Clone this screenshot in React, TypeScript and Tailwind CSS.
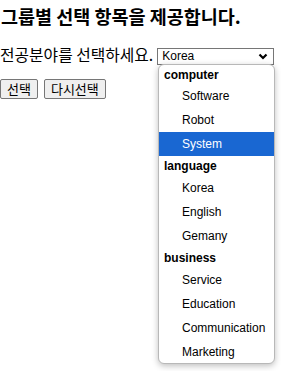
const groups = [
  { label: "computer", items: ["Software", "Robot", "System"] },
  { label: "language", items: ["Korea", "English", "Gemany"] },
  { label: "business", items: ["Service", "Education", "Communication", "Marketing"] },
];

export default function App() {
  return (
    <div className="relative w-[281px] h-[371px] bg-white text-black font-['Liberation_Sans','Noto_Sans_CJK_KR',sans-serif]">
      <h3 className="pt-[5px] pl-[1px] text-[18.5px] leading-[22px] font-bold font-['Noto_Sans_CJK_KR',sans-serif]">
        그룹별 선택 항목을 제공합니다.
      </h3>

      <div className="mt-[18px] flex items-center h-[20px]">
        <span className="text-[15.8px] leading-[20px] font-['Noto_Sans_CJK_KR',sans-serif]">
          전공분야를 선택하세요.
        </span>
        <div className="ml-[4px] mt-[2px] w-[117px] h-[17px] border border-[#767676] flex items-center justify-between pl-[4px] pr-[4px]">
          <span className="text-[12px] leading-[15px]">Korea</span>
          <svg width="10" height="7" viewBox="0 0 10 7" className="mr-[1px]">
            <polyline points="1.5,1.5 5,5 8.5,1.5" fill="none" stroke="#000" strokeWidth="2.2" />
          </svg>
        </div>
      </div>

      <div className="mt-[14px] flex gap-[6px]">
        <button className="h-[20px] px-[6px] border border-[#767676] bg-[#efefef] text-[13px] leading-[16px] rounded-[2px] font-['Noto_Sans_CJK_KR',sans-serif]">
          선택
        </button>
        <button className="h-[20px] px-[6px] border border-[#767676] bg-[#efefef] text-[13px] leading-[16px] rounded-[2px] font-['Noto_Sans_CJK_KR',sans-serif]">
          다시선택
        </button>
      </div>

      <div className="absolute left-[158px] top-[64px] w-[117px] h-[300px] bg-white border border-[#b8b8b8] rounded-[6px] shadow-[0_2px_6px_rgba(0,0,0,0.25)] overflow-hidden flex flex-col">
        {groups.map((g, i) => (
          <div key={g.label} className="flex flex-col">
            <div
              className={
                i === 0
                  ? "h-[19px] flex items-center pl-[5px] text-[12px] font-bold"
                  : "h-[20px] flex items-center pl-[5px] text-[12px] font-bold"
              }
            >
              {g.label}
            </div>
            {g.items.map((it) => (
              <div
                key={it}
                className={
                  it === "System"
                    ? "h-[24px] flex items-center pl-[23px] text-[12px] bg-[#1967d2] text-white"
                    : "h-[24px] flex items-center pl-[23px] text-[12px]"
                }
              >
                {it}
              </div>
            ))}
          </div>
        ))}
      </div>
    </div>
  );
}
